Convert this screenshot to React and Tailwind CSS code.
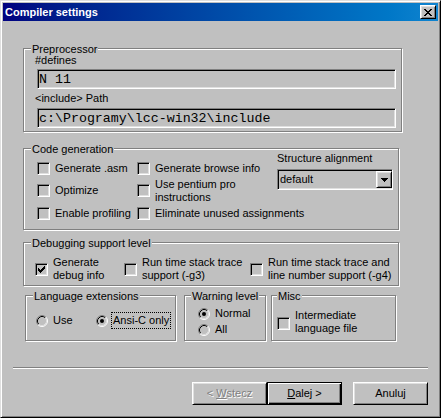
const raised =
  "border border-t-white border-l-white border-r-black border-b-black shadow-[inset_1px_1px_#dfdfdf,inset_-1px_-1px_#808080]";
const sunken =
  "border border-t-[#808080] border-l-[#808080] border-r-white border-b-white shadow-[inset_1px_1px_#000,inset_-1px_-1px_#dfdfdf]";

function Group({ label, labelLeft, className, children }) {
  return (
    <div
      className={`relative border border-[#808080] shadow-[inset_1px_1px_#fff,1px_1px_#fff] ${className}`}
    >
      <span className={`absolute -top-[6px] ${labelLeft} bg-[#c0c0c0] px-[1px] whitespace-nowrap`}>
        {label}
      </span>
      {children}
    </div>
  );
}

function Check({ checked, className = "" }) {
  return (
    <span
      className={`w-[13px] h-[13px] shrink-0 flex items-center justify-center bg-[#c0c0c0] ${sunken} ${className}`}
    >
      {checked && (
        <svg width="7" height="7" viewBox="0 0 7 7" shapeRendering="crispEdges">
          <path
            d="M0 2h1v3H0zM1 3h1v3H1zM2 4h1v3H2zM3 3h1v3H3zM4 2h1v3H4zM5 1h1v3H5zM6 0h1v3H6z"
            fill="#000"
          />
        </svg>
      )}
    </span>
  );
}

function Radio({ checked, className = "" }) {
  return (
    <svg width="12" height="12" viewBox="0 0 12 12" className={`shrink-0 ${className}`}>
      <circle cx="6" cy="6" r="4.5" fill="#c0c0c0" />
      <path d="M2.11 9.89A5.5 5.5 0 0 1 9.89 2.11" stroke="#808080" fill="none" />
      <path d="M9.89 2.11A5.5 5.5 0 0 1 2.11 9.89" stroke="#fff" fill="none" />
      <path d="M2.82 9.18A4.5 4.5 0 0 1 9.18 2.82" stroke="#000" fill="none" />
      <path d="M9.18 2.82A4.5 4.5 0 0 1 2.82 9.18" stroke="#dfdfdf" fill="none" />
      {checked && <circle cx="6" cy="6" r="2" fill="#000" />}
    </svg>
  );
}

function Edit({ value, className = "" }) {
  return (
    <div
      className={`ml-[2px] w-[359px] h-[20px] flex items-center pl-[1px] bg-[#c0c0c0] ${sunken} font-['Liberation_Mono',monospace] text-[13.3px] leading-[13px] ${className}`}
    >
      {value}
    </div>
  );
}

function CheckRow({ label, height }) {
  return (
    <div className={`flex items-center ${height}`}>
      <Check />
      <span className="ml-[5px] whitespace-nowrap">{label}</span>
    </div>
  );
}

export default function App() {
  return (
    <div className="w-[441px] h-[418px] flex flex-col p-[2px] bg-[#c0c0c0] border border-t-[#dfdfdf] border-l-[#dfdfdf] border-r-black border-b-black shadow-[inset_1px_1px_#fff,inset_-1px_-1px_#808080] font-['Liberation_Sans',Arial,sans-serif] text-[11px] leading-[13px] text-black">
      {/* title bar */}
      <div className="h-[18px] shrink-0 flex items-center justify-between px-[2px] bg-linear-to-r from-[#000080] to-[#1084d0]">
        <span className="font-bold text-white">Compiler settings</span>
        <div className={`w-[16px] h-[14px] flex items-center justify-center bg-[#c0c0c0] ${raised}`}>
          <svg width="8" height="7" viewBox="0 0 8 7" shapeRendering="crispEdges">
            <path
              d="M0 0h2v1H0zM6 0h2v1H6zM1 1h2v1H1zM5 1h2v1H5zM2 2h4v1H2zM3 3h2v1H3zM2 4h4v1H2zM1 5h2v1H1zM5 5h2v1H5zM0 6h2v1H0zM6 6h2v1H6z"
              fill="#000"
            />
          </svg>
        </div>
      </div>

      <div className="flex flex-col pt-[27px]">
        <Group
          label="Preprocessor"
          labelLeft="left-[7px]"
          className="ml-[20px] w-[379px] h-[84px] flex flex-col pl-[11px] pt-[5px]"
        >
          <span>#defines</span>
          <Edit className="mt-[2px]" value="N 11" />
          <span className="mt-[3px]">&lt;include&gt; Path</span>
          <Edit className="mt-[3px]" value={"c:\\Programy\\lcc-win32\\include"} />
        </Group>

        <Group
          label="Code generation"
          labelLeft="left-[7px]"
          className="ml-[20px] mt-[16px] w-[376px] h-[82px] flex pl-[13px]"
        >
          <div className="w-[100px] shrink-0 flex flex-col pt-[9px]">
            <CheckRow label="Generate .asm" height="h-[21px]" />
            <CheckRow label="Optimize" height="h-[23px]" />
            <CheckRow label="Enable profiling" height="h-[23px]" />
          </div>
          <div className="w-[140px] shrink-0 flex flex-col pt-[9px]">
            <CheckRow label="Generate browse info" height="h-[21px]" />
            <CheckRow
              label={
                <>
                  Use pentium pro
                  <br />
                  instructions
                </>
              }
              height="h-[23px]"
            />
            <CheckRow label="Eliminate unused assignments" height="h-[23px]" />
          </div>
          <div className="flex flex-col pt-[3px]">
            <span className="whitespace-nowrap">Structure alignment</span>
            <div
              className={`mt-[4px] w-[116px] h-[21px] flex items-center justify-between bg-[#c0c0c0] ${sunken}`}
            >
              <span className="pl-[2px]">default</span>
              <div
                className={`w-[16px] h-[17px] flex items-center justify-center bg-[#c0c0c0] ${raised}`}
              >
                <svg width="7" height="4" viewBox="0 0 7 4" shapeRendering="crispEdges">
                  <path d="M0 0h7v1H0zM1 1h5v1H1zM2 2h3v1H2zM3 3h1v1H3z" fill="#000" />
                </svg>
              </div>
            </div>
          </div>
        </Group>

        <Group
          label="Debugging support level"
          labelLeft="left-[7px]"
          className="ml-[20px] mt-[12px] w-[376px] h-[44px] flex pl-[11px] pt-[13px]"
        >
          <div className="w-[89px] shrink-0 flex items-start">
            <Check checked className="mt-[7px]" />
            <span className="ml-[5px] whitespace-nowrap">
              Generate
              <br />
              debug info
            </span>
          </div>
          <div className="w-[126px] shrink-0 flex items-start">
            <Check className="mt-[7px]" />
            <span className="ml-[5px] whitespace-nowrap">
              Run time stack trace
              <br />
              support (-g3)
            </span>
          </div>
          <div className="flex items-start">
            <Check className="mt-[7px]" />
            <span className="ml-[5px] whitespace-nowrap">
              Run time stack trace and
              <br />
              line number support (-g4)
            </span>
          </div>
        </Group>

        <div className="ml-[22px] mt-[9px] flex">
          <Group
            label="Language extensions"
            labelLeft="left-[7px]"
            className="w-[151px] h-[46px] flex items-start pl-[10px] pt-[16px]"
          >
            <div className="w-[60px] shrink-0 flex items-start">
              <Radio className="mt-[3px]" />
              <span className="ml-[5px] mt-[2px]">Use</span>
            </div>
            <div className="flex items-start">
              <Radio checked className="mt-[3px]" />
              <span className="ml-[3px] border border-dotted border-black px-[1px] py-[1px] whitespace-nowrap">
                Ansi-C only
              </span>
            </div>
          </Group>

          <Group
            label="Warning level"
            labelLeft="left-[6px]"
            className="ml-[8px] w-[82px] h-[46px] flex flex-col pl-[13px] pt-[10px]"
          >
            <div className="h-[16px] flex items-start">
              <Radio checked className="mt-[2px]" />
              <span className="ml-[5px] mt-[1px]">Normal</span>
            </div>
            <div className="h-[16px] flex items-start">
              <Radio className="mt-[2px]" />
              <span className="ml-[5px] mt-[1px]">All</span>
            </div>
          </Group>

          <Group
            label="Misc"
            labelLeft="left-[5px]"
            className="ml-[5px] w-[125px] h-[46px] flex items-start pl-[5px] pt-[13px]"
          >
            <Check className="mt-[8px]" />
            <span className="ml-[5px] whitespace-nowrap">
              Intermediate
              <br />
              language file
            </span>
          </Group>
        </div>

        <div className="ml-[10px] mt-[26px] w-[415px] h-[2px] border-t border-t-[#808080] border-b border-b-white" />

        <div className="ml-[10px] mt-[13px] w-[415px] flex justify-end">
          <div
            className={`w-[75px] h-[23px] flex items-center justify-center text-[#808080] [text-shadow:1px_1px_0_#fff] ${raised}`}
          >
            &lt; <span className="underline ml-[3px]">W</span>stecz
          </div>
          <div className="w-[75px] h-[23px] flex items-center justify-center border border-black shadow-[inset_1px_1px_#fff,inset_-1px_-1px_#000,inset_-2px_-2px_#808080]">
            <span className="underline">D</span>alej &gt;
          </div>
          <div className={`ml-[11px] w-[75px] h-[23px] flex items-center justify-center ${raised}`}>
            Anuluj
          </div>
        </div>
      </div>
    </div>
  );
}
